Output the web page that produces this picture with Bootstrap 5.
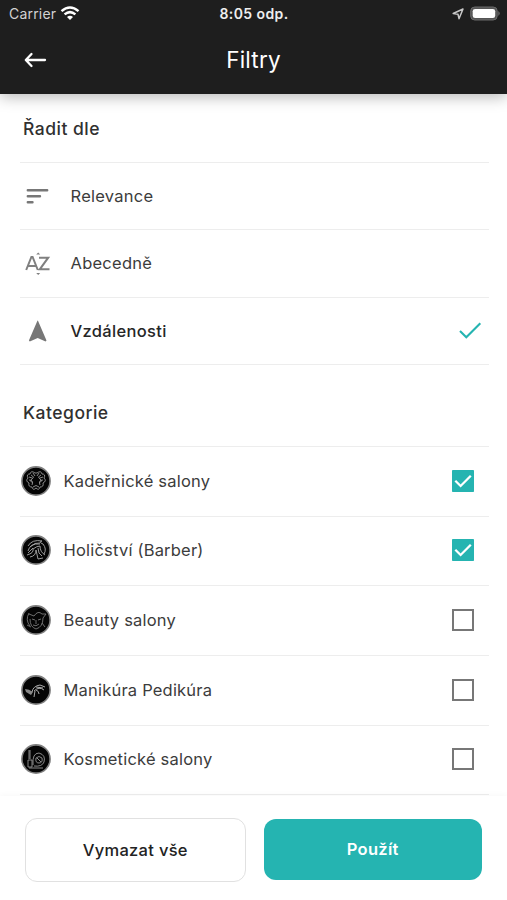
<!DOCTYPE html>
<html lang="cs">
<head>
<meta charset="utf-8">
<meta name="viewport" content="width=device-width, initial-scale=1">
<title>Filtry</title>
<link href="https://cdn.jsdelivr.net/npm/bootstrap@5.3.0/dist/css/bootstrap.min.css" rel="stylesheet">
<style>
body{font-family:Inter,"Liberation Sans",sans-serif;color:#3c3c3c;background:#fff;height:900px;overflow:hidden;font-size:16.5px;line-height:24px}
svg{display:block;flex:none}
.top-area{height:94px;background:#1e1e1e;color:#fff;box-shadow:0 3px 14px rgba(0,0,0,.28);position:relative}
.status-line{height:27px;font-size:14px;padding:0 6px 0 9px}
.status-line>*{flex:1 1 0}
.carrier{color:#d2d2d2;letter-spacing:.2px}
.clock{font-weight:600;font-size:14px;letter-spacing:.4px;color:#eee;margin-left:-2px}
.title-line{height:65px;padding:0 23px}
.title-line>*{flex:1 1 0}
.title-line h1{font-size:22.5px;font-weight:400;letter-spacing:.2px}
.filter-list{padding:0 18px 0 20px}
.section-title{font-size:17.5px;font-weight:500;letter-spacing:.5px;color:#303030;padding-left:3px;border-bottom:1px solid #ededed}
.sort-title{height:69px}
.cat-title{height:82px;padding-top:14px}
.sort-row{height:67.3px;border-bottom:1px solid #ededed;padding:0 6px 0 3px}
.sort-row .label-text{margin-left:17.5px;letter-spacing:.25px}
.sort-row .chosen{letter-spacing:.32px;font-weight:500;color:#262626}
.cat-row{height:69.7px;border-bottom:1px solid #ededed;padding:0 15px 1px 1px}
.cat-row .label-text{margin-left:12.5px;letter-spacing:.2px}
.action-bar{height:104px;padding:22px 25px 0 25px;gap:18px;background:#fff;box-shadow:0 -2px 5px rgba(0,0,0,.025);position:relative}
.action-bar .btn{flex:1 1 0;border-radius:12px;font-size:16.5px;font-weight:500;letter-spacing:.3px}
.btn-clear{height:64px;border:1.5px solid #e1e1e1;color:#222;background:#fff}
.btn-apply,.btn-apply:hover{height:61px;background:#25b4b1;color:#fff;font-weight:600!important;margin-top:1px}
</style>
</head>
<body class="d-flex flex-column">
<header class="top-area">
  <div class="status-line d-flex align-items-center">
    <div class="d-flex align-items-center carrier"><span>Carrier</span>
      <svg class="ms-1" width="20" height="15" viewBox="0 0 20 15" fill="none" stroke="#fff" stroke-width="2.5"><path d="M1.5 5.1Q10-2 18.5 5.1M4.6 8.4Q10 3.8 15.4 8.4"/><path d="M7 10.9Q10 8.4 13 10.9L10 14Z" fill="#fff" stroke="none"/></svg>
    </div>
    <div class="text-center clock">8:05 odp.</div>
    <div class="d-flex justify-content-end align-items-center">
      <svg class="me-1" width="15" height="14" viewBox="0 0 15 14" fill="none" stroke="#c8c8c8" stroke-width="1.5" stroke-linejoin="round"><path d="M3.2 6.5 13 2 9 11.7 8 7.3Z"/></svg>
      <svg width="32" height="16" viewBox="0 0 32 16"><rect x="1.7" y="1" width="26.5" height="13" rx="4" fill="#555" stroke="#6b6b6b" stroke-width="1"/><rect x="3.7" y="2.9" width="22.5" height="9.2" rx="2.4" fill="#fff"/><path d="M29.4 5.1Q32 7.5 29.4 9.9Z" fill="#777"/></svg>
    </div>
  </div>
  <div class="title-line d-flex align-items-center">
    <div><svg width="25" height="20" viewBox="0 0 25 20" fill="none" stroke="#fff" stroke-width="2.3" stroke-linecap="round" stroke-linejoin="round"><path d="M22 10H3M8.5 4 2.8 10l5.7 6"/></svg></div>
    <h1 class="m-0 text-center">Filtry</h1>
    <div></div>
  </div>
</header>

<main class="filter-list flex-grow-1 overflow-hidden">
  <h2 class="section-title sort-title d-flex align-items-center m-0">Řadit dle</h2>
  <div class="sort-row d-flex align-items-center">
    <svg width="30" height="30" viewBox="0 0 30 30" stroke="#777" stroke-width="2.4" stroke-linecap="round"><path d="M4.8 9.2H24.2M4.8 15.2H17M4.8 21.2H9.5"/></svg>
    <span class="label-text">Relevance</span>
  </div>
  <div class="sort-row d-flex align-items-center">
    <svg width="30" height="30" viewBox="0 0 30 30" fill="none" stroke="#808080" stroke-width="2"><path d="M3.2 22 8.4 9h1.2L14.8 22M5 18h8M16 9.7H25.2L16.8 21.3H26.5"/><path d="M13.2 6.4 15.2 4.4l2 2ZM13.2 25h4l-2 2Z" fill="#808080" stroke="none"/></svg>
    <span class="label-text">Abecedně</span>
  </div>
  <div class="sort-row d-flex align-items-center">
    <svg width="30" height="30" viewBox="0 0 30 30" fill="#777"><path d="M14.7 4.6Q15 4.6 15.2 5.2L23.5 24.4 22.6 25.4 14.7 22 6.8 25.4 5.9 24.4 14.2 5.2Q14.4 4.6 14.7 4.6Z"/></svg>
    <span class="label-text chosen">Vzdálenosti</span>
    <svg class="ms-auto" width="26" height="26" viewBox="0 0 26 26" fill="none" stroke="#25b4b1" stroke-width="2.1"><path d="M3 13 9.3 19.3 23.3 5.3"/></svg>
  </div>

  <h2 class="section-title cat-title d-flex align-items-center m-0">Kategorie</h2>
  <div class="cat-row d-flex align-items-center">
    <svg width="30" height="30" viewBox="0 0 30 30" fill="none"><circle cx="15" cy="15" r="14.1" fill="#050505" stroke="#808080" stroke-width="1.6"/><g stroke="#999" stroke-width=".9"><path d="M14 7Q10 4 9 8 5 8 7 12 4 15 8 17 7 21 11 21 12 25 15 22 18 25 19 21 23 21 22 17 26 15 23 12 25 8 21 8 20 4 16 7ZM10 9q4 2 1 4t1 4M20 9q-4 2-1 4t-1 4M8 14q5 0 3 5M22 14q-5 0-3 5M12 21q3-3 6 0M12 7l2 3M18 7l-2 3M8 11l3 1M22 11l-3 1"/></g></svg>
    <span class="label-text">Kadeřnické salony</span>
    <svg class="ms-auto" width="22" height="22" viewBox="0 0 22 22"><rect width="22" height="22" rx=".8" fill="#25b4b1"/><path d="M3.3 10.8 8.6 16 18.8 5.8" fill="none" stroke="#fff" stroke-width="2.3"/></svg>
  </div>
  <div class="cat-row d-flex align-items-center">
    <svg width="30" height="30" viewBox="0 0 30 30" fill="none"><circle cx="15" cy="15" r="14.1" fill="#050505" stroke="#808080" stroke-width="1.6"/><g stroke="#aaa" stroke-width=".9"><path d="M7 11Q11 4 21 6 17 7 22 9 26 14 23 19M7 16Q9 8 19 9M6 20Q13 18 12 14q4-3 7-3 0 6 5 9M9 22q6-1 6-7l2 9 5-1M17 13l1 5 3 3M7 18l5-5M9 12q5-5 10-4"/></g></svg>
    <span class="label-text">Holičství (Barber)</span>
    <svg class="ms-auto" width="22" height="22" viewBox="0 0 22 22"><rect width="22" height="22" rx=".8" fill="#25b4b1"/><path d="M3.3 10.8 8.6 16 18.8 5.8" fill="none" stroke="#fff" stroke-width="2.3"/></svg>
  </div>
  <div class="cat-row d-flex align-items-center">
    <svg width="30" height="30" viewBox="0 0 30 30" fill="none"><circle cx="15" cy="15" r="14.1" fill="#050505" stroke="#808080" stroke-width="1.6"/><g stroke="#888" stroke-width=".8"><path d="M8 8Q4 15 9 21M8 9l5 2Q17 5 21 9l4 0-3 4q0 9-7 11-6-2-6-10M11 14l3 1M17 15l3-1M15 15v4M12 20q3 2 6-1M10 22l-4-2M21 18l3 4"/></g></svg>
    <span class="label-text">Beauty salony</span>
    <svg class="ms-auto" width="22" height="22" viewBox="0 0 22 22"><rect x="1" y="1" width="20" height="20" fill="none" stroke="#777" stroke-width="2"/></svg>
  </div>
  <div class="cat-row d-flex align-items-center">
    <svg width="30" height="30" viewBox="0 0 30 30" fill="none"><circle cx="15" cy="15" r="14.1" fill="#050505" stroke="#808080" stroke-width="1.6"/><path d="M4 14q4 0 8 3l-2 3-5-3Z" fill="#888"/><g stroke="#aaa" stroke-width="1"><path d="M11 17q1-6 8-7l5 2M13 16q5-5 10-1M14 16l-1 6M15 15q3 1 3 4M15 12l7 1"/></g></svg>
    <span class="label-text">Manikúra Pedikúra</span>
    <svg class="ms-auto" width="22" height="22" viewBox="0 0 22 22"><rect x="1" y="1" width="20" height="20" fill="none" stroke="#777" stroke-width="2"/></svg>
  </div>
  <div class="cat-row d-flex align-items-center">
    <svg width="30" height="30" viewBox="0 0 30 30" fill="none"><circle cx="15" cy="15" r="14.1" fill="#050505" stroke="#808080" stroke-width="1.6"/><g stroke="#999" stroke-width=".9"><path d="M8 6v9M9 6v9M7 16h4v7H7ZM12 21q-1-12 6-12 7 2 5 9-2 5-10 4M15 14q3-3 6 0 1 5-3 5t-3-5M16 14l4 4M8 24h14"/></g></svg>
    <span class="label-text">Kosmetické salony</span>
    <svg class="ms-auto" width="22" height="22" viewBox="0 0 22 22"><rect x="1" y="1" width="20" height="20" fill="none" stroke="#777" stroke-width="2"/></svg>
  </div>
</main>

<footer class="action-bar d-flex align-items-start flex-shrink-0">
  <button type="button" class="btn btn-clear">Vymazat vše</button>
  <button type="button" class="btn btn-apply border-0">Použít</button>
</footer>
<script src="https://cdn.jsdelivr.net/npm/bootstrap@5.3.0/dist/js/bootstrap.bundle.min.js"></script>
</body>
</html>
